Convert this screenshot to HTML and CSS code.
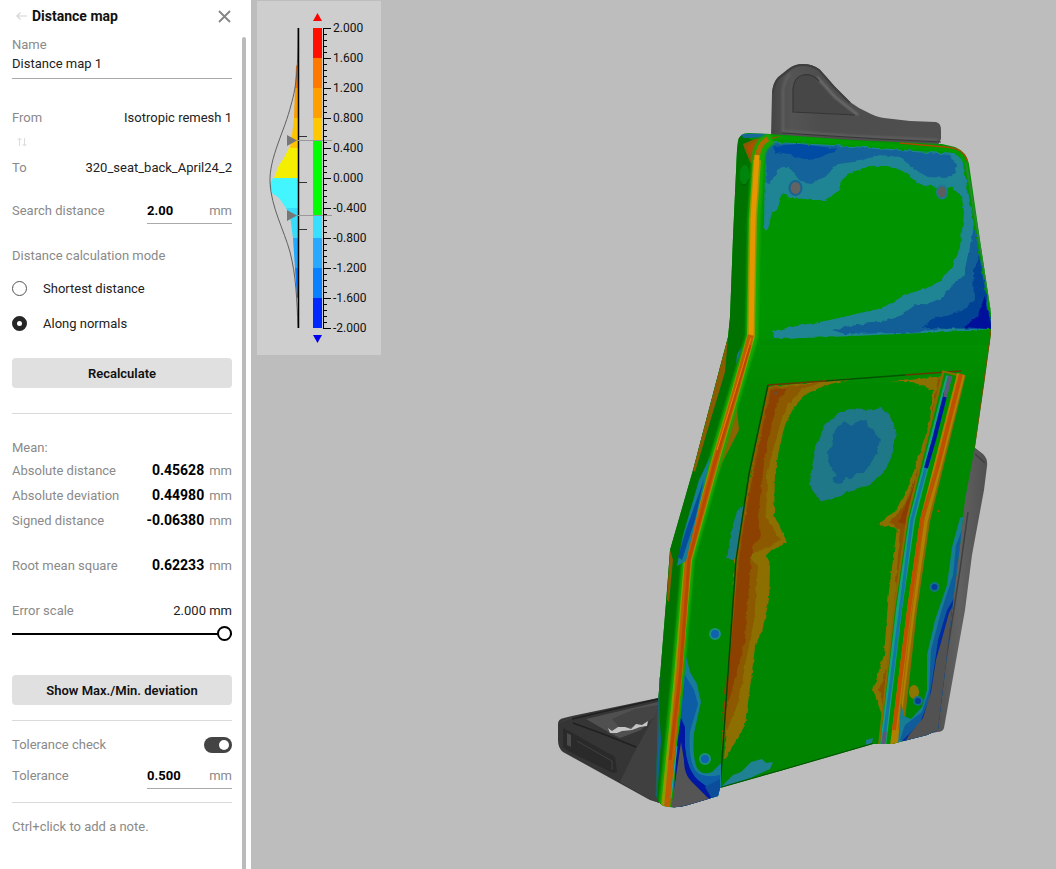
FILE: index.html
```html
<!DOCTYPE html>
<html lang="en">
<head>
<meta charset="utf-8">
<title>Distance map</title>
<link rel="stylesheet" href="styles.css">
</head>
<body>
<div class="app">
  <aside class="panel">
    <header class="panel-head">
      <button class="icon-btn back" aria-label="Back"><svg width="12" height="10" viewBox="0 0 12 10"><path d="M11 5H1M4.500 1.500L1 5l3.500 3.500" fill="none" stroke="#d4d4d4" stroke-width="1.200"/></svg></button>
      <h1>Distance map</h1>
      <button class="icon-btn close" aria-label="Close"><svg width="13" height="13" viewBox="0 0 13 13"><path d="M1 1l11 11M12 1L1 12" fill="none" stroke="#858585" stroke-width="1.800"/></svg></button>
    </header>
    <div class="panel-main">
      <form class="content">
        <label class="name-label" for="name">Name</label>
        <input class="name-input" id="name" type="text" value="Distance map 1">
        <div class="row from"><span class="muted">From</span><span>Isotropic remesh 1</span></div>
        <div class="row swap-row"><button type="button" class="icon-btn swap" aria-label="Swap"><svg width="10" height="10" viewBox="0 0 10 10"><path d="M2.500 9V1M.5 3l2-2 2 2M7.500 1v8M5.500 7l2 2 2-2" fill="none" stroke="#dcdcdc"/></svg></button></div>
        <div class="row to"><span class="muted">To</span><span>320_seat_back_April24_2</span></div>
        <div class="row search"><label class="muted" for="search">Search distance</label><span class="field"><input id="search" type="text" value="2.00"><span class="muted">mm</span></span></div>
        <fieldset>
          <legend class="muted">Distance calculation mode</legend>
          <label class="option"><input type="radio" name="mode">Shortest distance</label>
          <label class="option"><input type="radio" name="mode" checked>Along normals</label>
        </fieldset>
        <button type="button" class="btn recalc">Recalculate</button>
        <hr class="rule-wide">
        <div class="mean muted">Mean:</div>
        <div class="row"><span class="muted">Absolute distance</span><span class="muted"><b>0.45628</b>mm</span></div>
        <div class="row"><span class="muted">Absolute deviation</span><span class="muted"><b>0.44980</b>mm</span></div>
        <div class="row"><span class="muted">Signed distance</span><span class="muted"><b>-0.06380</b>mm</span></div>
        <div class="row spaced"><span class="muted">Root mean square</span><span class="muted"><b>0.62233</b>mm</span></div>
        <div class="row spaced"><label class="muted" for="scale">Error scale</label><span>2.000 mm</span></div>
        <input class="slider" id="scale" type="range" min="0" max="2" step="0.001" value="2">
        <button type="button" class="btn show">Show Max./Min. deviation</button>
        <hr>
        <div class="row check"><label class="muted" for="tolcheck">Tolerance check</label><input class="switch" id="tolcheck" type="checkbox" checked></div>
        <div class="row tol"><label class="muted" for="tol">Tolerance</label><span class="field"><input id="tol" type="text" value="0.500"><span class="muted">mm</span></span></div>
        <hr class="rule-end">
        <p class="note muted">Ctrl+click to add a note.</p>
      </form>
      <div class="scrollbar"></div>
    </div>
  </aside>

  <main class="viewport">
    <svg class="model" viewBox="251 0 805 869" preserveAspectRatio="xMidYMid meet" role="img" aria-label="Seat back deviation model">
      <defs>
        <clipPath id="body"><path d="M748 133Q740 133 738 141L737 150L733 237L730 317L728 337L720 367L693 470L670 550L667 590L660 677L658 703L656 795Q658 804 664 806Q675 809 688 805L718 796L720 788L780 771L873 744H892L927 735L938 730L944 680L952 610L960 545L965 500L975 447L984 385L991 334V313L980 240L969 164Q967 152 955 147L942 144L853 140L770 134Z"/></clipPath>
        <linearGradient id="face" x1="0" y1="0" x2="0" y2="1"><stop offset="0" stop-color="#009600"/><stop offset=".28" stop-color="#009400"/><stop offset=".38" stop-color="#008900"/><stop offset="1" stop-color="#008400"/></linearGradient>
        <linearGradient id="metal" x1="0" y1="0" x2="1" y2="0"><stop offset="0" stop-color="#444"/><stop offset=".12" stop-color="#545454"/><stop offset=".3" stop-color="#4d4d4d"/><stop offset="1" stop-color="#4f4f4f"/></linearGradient>
        <linearGradient id="rail" x1="0" y1="0" x2="1" y2="0"><stop offset="0" stop-color="#474747"/><stop offset=".6" stop-color="#606060"/><stop offset="1" stop-color="#505050"/></linearGradient>
        <filter id="soft" x="-20%" y="-5%" width="140%" height="110%"><feGaussianBlur stdDeviation="1"/></filter>
        <filter id="rough" filterUnits="userSpaceOnUse" x="650" y="120" width="350" height="700" color-interpolation-filters="sRGB"><feTurbulence type="fractalNoise" baseFrequency=".14" numOctaves="2" seed="4"/><feDisplacementMap in="SourceGraphic" scale="4" xChannelSelector="R" yChannelSelector="G"/></filter>
      </defs>

      <!-- headrest -->
      <path fill="url(#metal)" d="M771 137L772 93Q773 82 778 77L788 69Q794 64 803 64Q812 64 819 69Q827 77 833 85Q841 94 850 102Q858 108 867 112Q876 117 884 118L910 121L936 122Q941 123 941 130V139L938 145Z"/>
      <path fill="none" stroke="#3e3e3e" stroke-width="2" d="M773 93Q774 83 779 78L789 70Q795 65 803 65Q812 65 819 70L834 87L850 103"/>
      <path fill="#474747" d="M793 112V89Q794 77 803 75Q812 73 819 81L837 100L855 115Z"/>
      <path fill="none" stroke="#747474" stroke-width="2" filter="url(#soft)" d="M817 77L835 97L858 115"/>
      <path fill="none" stroke="#636363" stroke-width="2" filter="url(#soft)" d="M783 133V92Q784 80 790 74M784 131L850 136L938 140"/>
      <path fill="none" stroke="#363636" stroke-width="1.200" d="M855 115L793 112V89Q794 77 803 75Q812 73 819 81M782 133L880 139L941 142"/>

      <!-- right rail -->
      <path fill="url(#rail)" d="M974 447L983 454Q988 459 987 466L984 490L972 555L965 610L944 728Q943 732 937 732L918 736L945 600Z"/>
      <path fill="none" stroke="#404040" stroke-width="1.500" d="M968 512L960 570L936 724M975 454L985 463"/>

      <!-- seat base -->
      <path fill="#353535" d="M558 724Q558 719 564 718L572 716L658 698L660 803L650 800L563 752Q558 748 558 740Z"/>
      <path fill="#505050" d="M586 719L658 702V712L641 730L620 738L610 733Z"/>
      <path fill="#444" d="M612 719L635 709L658 705V711L646 725L620 728Z"/>
      <path fill="#c5c5c5" d="M608 728L612 731L618 727L625 727L631 729L636 724L642 725L648 721L647 726L640 727L632 730L622 731L617 733L610 733Z"/>
      <path fill="#404040" d="M632 757L659 707V803L647 798L620 782Z"/>
      <path fill="#2a2a2a" d="M563 728L569 731L615 757L617 772L613 773L568 751L563 747Z"/>
      <path fill="#4b4b4b" d="M567 733L571 735V747L567 745Z"/>
      <path fill="none" stroke="#404040" d="M577 741L612 761V770M561 722L573 717"/>
      <path fill="none" stroke="#202020" stroke-width="1.500" d="M572 719L658 699M573 723L606 735L636 747"/>

      <!-- seat back with deviation colours -->
      <g clip-path="url(#body)">
        <path fill="url(#face)" d="M650 120h350v700H650z"/>
        <path fill="#007200" d="M730 130L753 140L750 334L734 390L687 560L662 807H650V600Z"/>
        <path fill="#8a5c00" d="M728 337L720 367L693 470L695 472L725 372ZM670 550L667 600L669 602L673 560Z"/>
        <ellipse cx="744.500" cy="175" rx="5" ry="10" fill="#00850c"/>
        <path fill="none" stroke="#005c00" d="M741 184Q746 188 749 179"/>
        <path fill="#156a9b" d="M740 134L770 133L769 137L744 138Z"/>

        <!-- top panel -->
        <g filter="url(#rough)">
          <path fill="#1f8594" d="M765 146Q766 142 774 142L853 146L955 154Q962 157 964 168L992 329L900 335L774 339L773 331L792 327L830 320L882 308L907 294L925 289L940 281L953 266L960 248L964 213L962 197L953 188L937 187L920 184L900 170L890 166H870L850 173L842 180L840 190L825 200L812 200L790 197L783 193L777 210L772 213L768 229L764 231Z"/>
          <path fill="#14649b" d="M765 150Q767 143 776 143L853 147L950 155L957 165L955 173L945 178L928 177L915 170L900 157L880 155L860 161L838 164L832 170L825 177L810 183L800 181L789 167L778 169L770 184L766 183Z"/>
          <path fill="#004ba3" d="M773 146L800 144L838 149L819 158L807 160L790 155L776 153Z"/>
          <path fill="#125f98" d="M974 225L992 325L900 333L845 334L832 330L850 326L885 321L902 315L915 305L926 305L943 297L952 285L965 275L969 253Z"/>
          <path fill="#004394" d="M979 255L992 329L922 328L932 319L950 315L963 310L974 300L973 270Z"/>
          <path fill="#00109b" d="M985 297L992 329L963 327L978 316L981 306Z"/>
        </g>
        <path fill="#008c00" d="M760 340L990 330V345H760Z"/>
        <path fill="none" stroke="#009c00" stroke-width="4" d="M760 141L772 137L853 143L950 150Q962 151 966 165"/>
        <path fill="none" stroke="#2a8a30" stroke-width="2" d="M966 163L991 310"/>
        <path fill="none" stroke="#ac4800" stroke-width="1.500" d="M900 143L945 147Q965 148 968 163"/>
        <path fill="none" stroke="#7c4b00" d="M991 330L975 447"/>
        <path fill="#8d5900" d="M743 144L755 139L782 136L770 140Q760 142 757 150L751 164L745 150Z"/>
        <path fill="#b34c00" d="M747 147L757 140L768 138Q758 143 756 158L753 164Z"/>

        <!-- left crease -->
        <path fill="#8b6300" d="M736 390L737 410L739 430L722 463L707 507L691 558L699 500L720 435Z"/>
        <g fill="none" stroke-linejoin="round">
          <path stroke="#14a800" stroke-width="13" d="M772 138Q759 143 758 160L754 220L752 336L736 390L717 455L688 560L678 677L665 808" filter="url(#soft)"/>
          <path stroke="#8c9c00" stroke-width="8" d="M757 160L753 220L751 336L736 390L717 455L688 560L678 677L665 808"/>
          <path stroke="#b06800" stroke-width="5" d="M768 139Q758 144 757 160"/>
          <path stroke="#e89600" stroke-width="5" d="M757 155L753 220L751 340"/>
          <path stroke="#be5e00" stroke-width="6" d="M751 335L736 390L717 455L688 560L679 677L667 808"/>
          <path stroke="#b84800" stroke-width="3" d="M750 345L734 398L715 462L689 560L680 677L670 760"/>
          <path stroke="#ee8000" stroke-width="1" d="M751 338L736 388L717 450"/>
        </g>
        <path fill="#157e94" d="M711 455L703 490L686 561L677 566L683 535L699 480Z"/>
        <path fill="#064e9d" d="M704 479L695 520L682 560L678 557L686 530Z"/>
        <path fill="#167588" d="M741 348L740 355L736 364L737 354Z"/>

        <!-- left inner column -->
        <g filter="url(#rough)">
          <path fill="#1a7b87" d="M746 503L740 561L727 559L731 530L737 512Z"/>
          <path fill="#8c6f00" d="M767 387L852 378L839 382L824 386L806 394L794 407L785 425L779 450L775 475L774 515L787 542L774 550L766 555L770 566L769 600L762 632L755 647L751 680L745 725L724 762L735 560Z"/>
          <path fill="#8c5800" d="M767 388L820 383L802 389L788 404L780 425L773 450L767 475L766 516L780 540L750 556L758 566L754 620L746 660L739 700L722 743L738 550Z"/>
          <path fill="#8c4100" d="M771 389L789 388L779 398L773 420L765 455L758 515L761 536L752 547L745 640L732 690L722 724L739 553L750 490L762 430Z"/>
        </g>
        <path fill="none" stroke="#8f5900" stroke-width="1.200" d="M769 389L750 474L738 560L730 650L722 750"/>
        <path fill="none" stroke="#004800" stroke-width="1.500" d="M768 385L749 474L736 560L720 788"/>
        <path fill="none" stroke="#663600" stroke-width="1.500" d="M768 385L825 381M905 375L961 371"/>
        <path fill="none" stroke="#005400" stroke-width="1.500" d="M825 381L905 375"/>

        <!-- centre contour -->
        <g filter="url(#rough)">
          <path fill="#1e7887" d="M840 412L850 409L865 410L881 408L891 418L896 431L893 452L886 469L870 485L855 489L840 496L820 502L815 494L810 485L811 471L816 448L825 425Z"/>
          <path fill="#11608f" d="M838 426L845 422L852 426L858 422L866 420L868 426L873 430L880 440L876 455L864 473L857 473L850 479L846 478L838 485L832 479L836 475L829 463L828 452L833 445L832 437Z"/>
        </g>

        <!-- right grooves -->
        <g filter="url(#rough)">
          <path fill="#8b6f00" d="M892 382L960 374L925 480L908 560L903 640L893 710L883 718L873 690L884 655L889 590L897 528L878 525L896 510L910 483L921 450L930 420L933 390L912 382Z"/>
          <path fill="#8c5000" d="M938 378L948 376L916 528L906 580L895 665L885 710L879 690L890 656L900 530L890 522L905 504L925 457Z"/>
          <path fill="#8c3c00" d="M918 468L910 526L898 522L911 494Z"/>
        </g>
        <g fill="none" stroke-linejoin="round">
          <path stroke="#8a6a00" stroke-width="24" d="M954 373L918 520L905 610L890 746"/>
          <path stroke="#009000" stroke-width="18" d="M953 375L917 520L904 610L889 746"/>
          <path stroke="#17a080" stroke-width="6" d="M949 376L912 520L899 610L883 746"/>
          <path stroke="#1476a5" stroke-width="3" d="M950 376L928 460L912 520L899 620L883 746"/>
          <path stroke="#0015a0" stroke-width="4" d="M946 392L934 440L926 468"/>
          <path stroke="#5c587a" stroke-width="4" d="M950 376L945 397M885 732L883 746"/>
          <path stroke="#b08000" stroke-width="8" d="M961 374L924 520L911 610L894 746"/>
          <path stroke="#c05000" stroke-width="4" d="M961 374L938 465L922 520L909 610L894 730"/>
          <path stroke="#a96500" stroke-width="1" d="M936 467L924 520L912 610L898 730"/>
        </g>

        <!-- right edge -->
        <path fill="#167d92" d="M960 518L965 516L946 744H898L901 703L904 716L911 719L922 707L927 690V655L935 620L947 585L952 547Z"/>
        <path fill="#105c9b" d="M964 525L948 744L900 740L905 725L922 712L929 690L931 650L941 612L953 575L956 545Z"/>
        <path fill="#002a9f" d="M962 585L948 744L902 741L920 723L929 700L933 675L938 640L947 610Z"/>
        <path fill="#525252" d="M949 613L960 592L943 742L905 742L909 735L923 718L931 692L936 660L943 635Z"/>
        <path fill="#1c8699" d="M965 500L968 485L970 504L965 510Z"/>
        <ellipse cx="914" cy="692" rx="5" ry="7" fill="#8d7600"/>
        <circle cx="938.500" cy="511" r="1.200" fill="#a05000"/>

        <!-- bottom edge -->
        <path fill="#1f8191" d="M720 788L733 775L741 772L751 762L762 759L766 763L773 762L770 769L750 778Z"/>
        <path fill="#1d7a91" d="M866 740L873 738L872 743L866 745Z"/>
        <path fill="none" stroke="#005400" stroke-width="2" d="M720 788L780 771L873 744"/>
        <path fill="none" stroke="#8c5700" d="M790 769L860 749"/>

        <!-- lower left corner -->
        <path fill="#177c99" d="M686 656L690 672L697 684L701 702L694 733Q692 756 697 768Q702 776 712 772L721 763V808H672L681 720Z"/>
        <path fill="#0c5da6" d="M685 675L694 690L698 704L690 732Q688 758 695 770Q702 779 720 775V808H673L680 725Z"/>
        <path fill="#0017a2" d="M681 718L685 727V746Q687 770 698 780L706 786L712 797L700 808H673L677 745Z"/>
        <path fill="#555" d="M681 742L684 760Q684 774 691 781L709 799L700 810H671Z"/>
        <path fill="#0c4d9b" d="M720 779V797L712 799L705 787Z"/>
        <path fill="#145e9c" d="M658 690L661 740L657 800L655 807V700Z"/>
        <path fill="none" stroke="#22a2bb" d="M677 746L671 798"/>
      </g>
      <path fill="none" stroke="#245f54" stroke-width="1" d="M660 677L656 796"/>

      <!-- fasteners -->
      <g stroke-width="2">
        <ellipse cx="795.500" cy="188" rx="6" ry="7" fill="#636363" stroke="#1a6391"/>
        <ellipse cx="942" cy="192" rx="5" ry="6.500" fill="#5d5d5d" stroke="#1f7791"/>
        <circle cx="715" cy="634" r="5" fill="#1260b0" stroke="#18917c"/>
        <circle cx="705" cy="759" r="5" fill="#1260b0" stroke="#18917c"/>
        <circle cx="934.500" cy="587" r="4" fill="#063d99" stroke="#127383"/>
        <circle cx="918" cy="701" r="4" fill="#063d99" stroke="#127383"/>
        <circle cx="776" cy="393" r="1" fill="#656565" stroke="#704b29"/>
      </g>
    </svg>

    <section class="scale" aria-label="Deviation scale">
      <svg width="124" height="354" viewBox="257 1 124 354">
        <path fill="#f57200" d="M298 65L296 66L295 88H298Z"/>
        <path fill="#fa9f00" d="M298 88H295L294 118H298Z"/>
        <path fill="#ffc400" d="M298 118H294L292 135L290 148H298Z"/>
        <path fill="#f4ef00" d="M298 148H289L284 158L279 165L274 178H298Z"/>
        <path fill="#43f5ff" d="M298 178H273L269 186L272 193L279 198L286 208H298Z"/>
        <path fill="#38dcfa" d="M298 208H286L290 216L293 238H298Z"/>
        <path fill="#22a8ff" d="M298 238H293L295 268H298Z"/>
        <path fill="#087fff" d="M298 268H295L297 298H298Z"/>
        <path fill="none" stroke="#606060" d="M298 28C298 65 297 85 291 105C285 130 269 158 270 182C271 207 284 230 290 252C296 275 297 300 298 328"/>
        <path fill="none" stroke="#000" stroke-width="1.500" d="M298.500 28V328"/>
        <path fill="#ff1000" d="M313 28h9v30h-9z"/><path fill="#ff7800" d="M313 58h9v30h-9z"/><path fill="#ffa000" d="M313 88h9v30h-9z"/><path fill="#ffc800" d="M313 118h9v23h-9z"/>
        <path fill="#00ff00" d="M313 141h9v74h-9z"/><path fill="#37e0ff" d="M313 215h9v23h-9z"/><path fill="#28a9ff" d="M313 238h9v30h-9z"/><path fill="#0880ff" d="M313 268h9v30h-9z"/><path fill="#0028ff" d="M313 298h9v30h-9z"/>
        <path stroke="#999" d="M298 140.500H332M298 215.500H332"/>
        <path stroke="#000" d="M323.500 28V329"/>
        <path stroke="#000" stroke-width="4" stroke-dasharray="1 5" d="M325 28V329"/>
        <path stroke="#000" stroke-width="8" stroke-dasharray="1 29" d="M327 28V329"/>
        <path stroke="#333" d="M299 136.500H307M299 182.500H307M299 229.500H307"/>
        <path fill="#777" d="M287 135L297 140.500L287 146ZM287 210L297 215.500L287 221Z"/>
        <path fill="#f00" d="M317.500 13L322 21H313Z"/><path fill="#00e" d="M313 335H322L317.500 343Z"/>
        <g class="ticks">
          <text x="333" y="32">2.000</text><text x="333" y="62">1.600</text><text x="333" y="92">1.200</text><text x="333" y="122">0.800</text><text x="333" y="152">0.400</text><text x="333" y="182">0.000</text><text x="333" y="212">-0.400</text><text x="333" y="242">-0.800</text><text x="333" y="272">-1.200</text><text x="333" y="302">-1.600</text><text x="333" y="332">-2.000</text>
        </g>
      </svg>
    </section>
  </main>
</div>
</body>
</html>
```
FILE: styles.css
```css
* { box-sizing: border-box; }
body { margin: 0; font: 13px/20px Roboto, "Liberation Sans", sans-serif; color: #222; }
button, input { font: inherit; color: inherit; }
.app { display: flex; min-height: 100vh; background: #bdbdbd; }
.panel { flex: 0 0 251px; display: flex; flex-direction: column; background: #fff; }
.panel-head { display: flex; align-items: center; height: 33px; padding: 0 20px 1px 16px; }
.panel-head h1 { flex: 1; margin: 0 0 0 4px; font-size: 14px; font-weight: 700; color: #111; }
.icon-btn { display: flex; padding: 0; border: 0; background: none; }
.panel-main { flex: 1; display: flex; }
.content { flex: 1; display: flex; flex-direction: column; padding: 2px 10px 0 12px; }
.scrollbar { width: 4px; margin: 4px 5px 0 0; border-radius: 2px 2px 0 0; background: #bbb; }
.muted { color: #8a8a8a; }
.name-label { color: #8a8a8a; }
.name-input { width: 100%; height: 24px; padding: 0 0 6px; border: 0; border-bottom: 1px solid #aaa; outline: 0; }
.row { display: flex; align-items: center; justify-content: space-between; height: 25px; }
.from { margin-top: 26px; }
.swap-row { height: 24px; }
.swap { margin-left: 5px; }
.to { margin-top: 1px; }
.search { height: 26px; margin-top: 18px; }
.field { display: flex; align-items: center; width: 85px; height: 26px; border-bottom: 1px solid #aaa; }
.field input { flex: 1; min-width: 0; padding: 0; border: 0; outline: 0; background: none; font-weight: 700; color: #000; }
fieldset { margin: 20px 0 0; padding: 0; border: 0; }
legend { height: 27px; padding: 0; line-height: 24px; }
.option { display: flex; align-items: center; gap: 16px; height: 35px; }
.option input { appearance: none; width: 15px; height: 15px; margin: 0; border: 1px solid #555; border-radius: 50%; background: #fff; }
.option input:checked { border: 5px solid #262626; }
.btn { height: 30px; padding: 2px 0 0; border: 0; border-radius: 4px; background: #e0e0e0; color: #111; font-weight: 600; }
.recalc { margin-top: 17px; }
hr { width: 100%; height: 1px; margin: 15px 0 11px; border: 0; background: #dadada; }
.rule-wide { margin: 25px 0 22px; }
.mean { height: 22px; line-height: 24px; }
.row b { margin-right: 5px; font-size: 14px; color: #000; }
.spaced { margin-top: 20px; }
.slider { appearance: none; width: 100%; height: 22px; margin: 0; background: none; }
.slider::-webkit-slider-runnable-track { height: 2px; background: #000; }
.slider::-webkit-slider-thumb { appearance: none; width: 15px; height: 15px; margin-top: -7px; border: 2px solid #000; border-radius: 50%; background: #fff; }
.show { margin-top: 30px; }
.switch { appearance: none; display: flex; justify-content: flex-end; width: 28px; height: 16px; margin: 0; padding: 3px; border-radius: 8px; background: #444; }
.switch::before { content: ""; width: 10px; height: 10px; border-radius: 50%; background: #fff; }
.switch:not(:checked) { justify-content: flex-start; }
.tol { height: 26px; margin-top: 6px; }
.rule-end { margin: 13px 0 14px; }
.note { margin: 0; }
.viewport { position: relative; flex: 1; min-width: 0; }
.model { display: block; width: 100%; height: 100%; }
.scale { position: absolute; top: 1px; left: 6px; background: #cecece; }
.scale svg { display: block; }
.ticks { font: 12px Roboto, sans-serif; fill: #111; }
```
